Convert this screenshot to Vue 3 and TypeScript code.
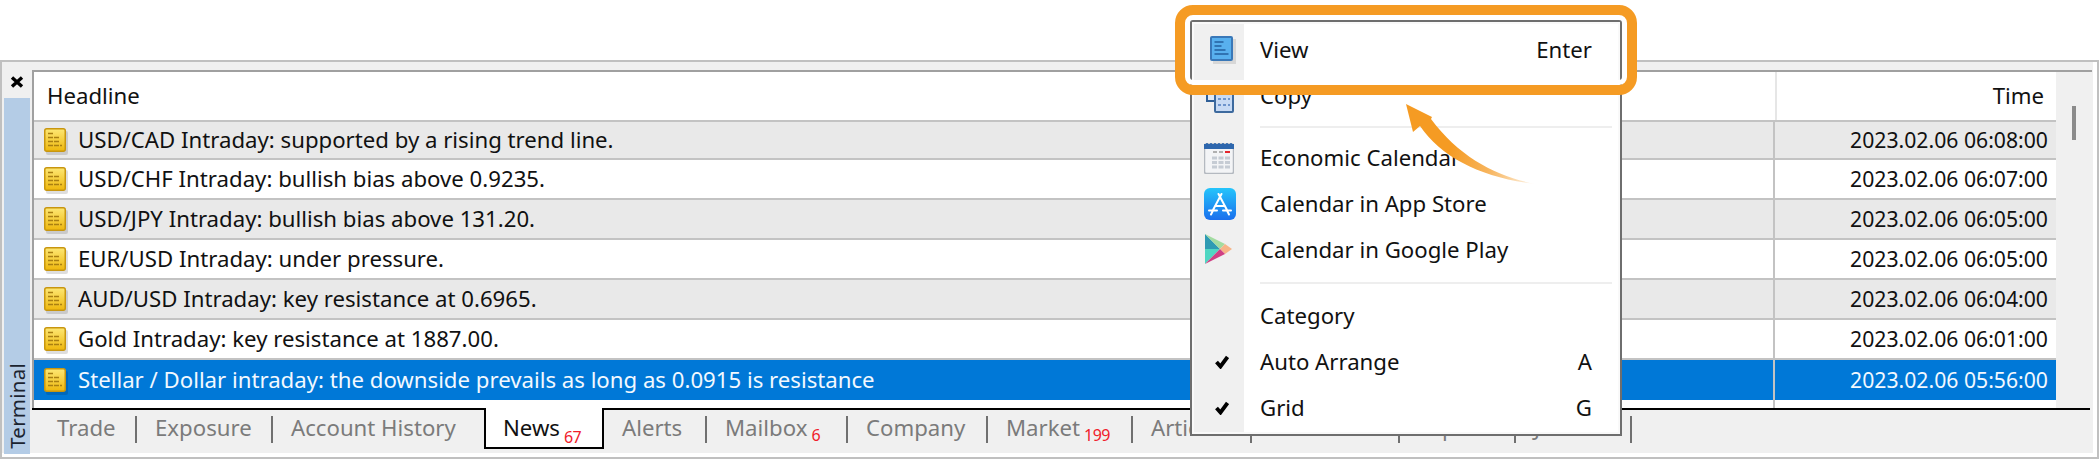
<script setup lang="ts">
interface Row { text: string; time: string; tone: 'grey' | 'white' | 'sel' }
interface Tab { label: string; badge?: string; width: number; active?: boolean }

const rows: Row[] = [
  { text: 'USD/CAD Intraday: supported by a rising trend line.', time: '2023.02.06 06:08:00', tone: 'grey' },
  { text: 'USD/CHF Intraday: bullish bias above 0.9235.', time: '2023.02.06 06:07:00', tone: 'white' },
  { text: 'USD/JPY Intraday: bullish bias above 131.20.', time: '2023.02.06 06:05:00', tone: 'grey' },
  { text: 'EUR/USD Intraday: under pressure.', time: '2023.02.06 06:05:00', tone: 'white' },
  { text: 'AUD/USD Intraday: key resistance at 0.6965.', time: '2023.02.06 06:04:00', tone: 'grey' },
  { text: 'Gold Intraday: key resistance at 1887.00.', time: '2023.02.06 06:01:00', tone: 'white' },
  { text: 'Stellar / Dollar intraday: the downside prevails as long as 0.0915 is resistance', time: '2023.02.06 05:56:00', tone: 'sel' },
]

const tabs: Tab[] = [
  { label: 'Trade', width: 98 },
  { label: 'Exposure', width: 136 },
  { label: 'Account History', width: 211 },
  { label: 'News', badge: '67', width: 120, active: true },
  { label: 'Alerts', width: 103 },
  { label: 'Mailbox', badge: '6', width: 141 },
  { label: 'Company', width: 140 },
  { label: 'Market', badge: '199', width: 145 },
  { label: 'Articles', width: 119 },
  { label: 'Code Base', width: 148 },
  { label: 'Experts', width: 116 },
  { label: 'Journal', width: 116 },
]
</script>

<template>
  <div class="page">
    <section class="window">
      <aside class="side">
        <svg class="close" width="14" height="12" viewBox="0 0 14 12">
          <path d="M2 1.5 L12 10.5 M12 1.5 L2 10.5" stroke="#000" stroke-width="3.4" fill="none" />
        </svg>
        <div class="side-bar"><span class="side-label">Terminal</span></div>
      </aside>

      <div class="main">
        <div class="table-wrap">
          <div class="table">
            <div class="line head">
              <div class="cell-main head-title">Headline</div>
              <div class="cell-time head-time">Time</div>
            </div>
            <div v-for="row in rows" :key="row.text + row.time" class="line row" :class="row.tone">
              <div class="cell-main">
                <svg class="note" width="26" height="28" viewBox="0 0 26 28">
                  <defs>
                    <linearGradient id="gold" x1="0" y1="0" x2="0" y2="1">
                      <stop offset="0" stop-color="#fde774" />
                      <stop offset="1" stop-color="#eeb70c" />
                    </linearGradient>
                  </defs>
                  <rect x="2" y="3" width="22" height="24" rx="2" fill="#000" opacity="0.13" />
                  <rect x="0.75" y="0.75" width="20.5" height="22.5" rx="2" fill="url(#gold)" stroke="#c8960f" stroke-width="1.5" />
                  <path d="M4 5.5h6M4 9.5h12M4 13.5h12M4 17.5h14" stroke="#a97f12" stroke-width="1.4" stroke-dasharray="5 1" fill="none" />
                </svg>
                <span class="row-text">{{ row.text }}</span>
              </div>
              <div class="cell-time">{{ row.time }}</div>
            </div>
            <div class="line filler"><div></div><div class="cell-time"></div></div>
          </div>
          <div class="scroll"><div class="thumb"></div></div>
        </div>

        <nav class="tabs">
          <div
            v-for="tab in tabs"
            :key="tab.label"
            class="tab"
            :class="{ active: tab.active }"
            :style="{ width: tab.width + 'px' }"
          >
            <span>{{ tab.label }}</span>
            <span v-if="tab.badge" class="badge">{{ tab.badge }}</span>
          </div>
        </nav>
      </div>
    </section>

    <div class="menu">
      <div class="menu-list">
        <div class="item">
          <div class="item-icon">
            <svg class="shift-4" width="26" height="28" viewBox="0 0 26 28">
              <rect x="3" y="3" width="23" height="25" fill="#000" opacity="0.1" />
              <rect x="1" y="1" width="21" height="23" rx="1" fill="#58b0ee" stroke="#3a78b8" stroke-width="2" />
              <path d="M4.5 6h9M4.5 10h7M4.5 14h11M4.5 18h14" stroke="#235f9e" stroke-width="1.6" fill="none" />
            </svg>
          </div>
          <span class="item-label">View</span><span class="item-key">Enter</span>
        </div>
        <div class="item">
          <div class="item-icon">
            <svg width="30" height="34" viewBox="0 0 30 34">
              <rect x="3" y="2" width="17" height="20" fill="#dfe9f6" stroke="#2f5f97" stroke-width="2" />
              <rect x="11" y="13" width="18" height="20" rx="1" fill="#c7daf4" stroke="#3d6a9e" stroke-width="2" />
              <path d="M14 20h12M14 26h12" stroke="#6d94cc" stroke-width="2" stroke-dasharray="3 2" fill="none" />
            </svg>
          </div>
          <span class="item-label">Copy</span>
        </div>
        <div class="sep sep-a"></div>
        <div class="item">
          <div class="item-icon">
            <svg width="30" height="32" viewBox="0 0 30 32">
              <rect x="0.5" y="2" width="29" height="29.5" rx="2" fill="#f3f4f6" stroke="#b4b9c0" stroke-width="1.5" />
              <rect x="0" y="2" width="30" height="5" fill="#2e67ad" />
              <path d="M3 1v4M7 1v4M11 1v4M15 1v4M19 1v4M23 1v4M27 1v4" stroke="#2e67ad" stroke-width="1.6" />
              <path d="M9 10h4M15 10h4" stroke="#b0b0b0" stroke-width="2" />
              <path d="M21 10h5" stroke="#e5262c" stroke-width="2" />
              <path d="M8 16h18M8 20.5h18M8 25h18" stroke="#c6ccd4" stroke-width="3" stroke-dasharray="5 1.5" />
            </svg>
          </div>
          <span class="item-label">Economic Calendar</span>
        </div>
        <div class="item">
          <div class="item-icon">
            <svg class="shift-1" width="32" height="32" viewBox="0 0 32 32">
              <defs>
                <linearGradient id="store" x1="0" y1="0" x2="0" y2="1">
                  <stop offset="0" stop-color="#25c5fb" />
                  <stop offset="1" stop-color="#1a6fed" />
                </linearGradient>
              </defs>
              <rect width="32" height="32" rx="6" fill="url(#store)" />
              <path d="M17.5 6 L9 22 M14.5 6 L23 22 M5 22.5h8M19 22.5h8M11 18h10M7 26.5l2-4M25 26.5l-2-4" stroke="#fff" stroke-width="2" stroke-linecap="round" fill="none" />
            </svg>
          </div>
          <span class="item-label">Calendar in App Store</span>
        </div>
        <div class="item">
          <div class="item-icon">
            <svg width="30" height="34" viewBox="0 0 30 34">
              <path d="M1 1 V16 L16 16 Z" fill="#2f9bb3" />
              <path d="M1 16 V31 L16 16 Z" fill="#4fd6c2" />
              <path d="M1 1 L16 16 L21 11 Z" fill="#a3dca0" />
              <path d="M21 11 L16 16 L21 21 L28 16 Z" fill="#f7b487" />
              <path d="M1 31 L16 16 L21 21 Z" fill="#cf3f84" />
            </svg>
          </div>
          <span class="item-label">Calendar in Google Play</span>
        </div>
        <div class="sep sep-b"></div>
        <div class="item">
          <div class="item-icon"></div>
          <span class="item-label">Category</span>
        </div>
        <div class="item">
          <div class="item-icon">
            <svg class="shift-2" width="14" height="14" viewBox="0 0 14 14">
              <path d="M1.5 7 L5.5 11.5 L12.5 2" stroke="#000" stroke-width="3.8" fill="none" />
            </svg>
          </div>
          <span class="item-label">Auto Arrange</span><span class="item-key">A</span>
        </div>
        <div class="item">
          <div class="item-icon">
            <svg class="shift-2" width="14" height="14" viewBox="0 0 14 14">
              <path d="M1.5 7 L5.5 11.5 L12.5 2" stroke="#000" stroke-width="3.8" fill="none" />
            </svg>
          </div>
          <span class="item-label">Grid</span><span class="item-key">G</span>
        </div>
      </div>
    </div>

    <div class="ring"></div>

    <svg class="arrow" width="160" height="100" viewBox="1400 100 160 100">
      <defs>
        <linearGradient id="fade" gradientUnits="userSpaceOnUse" x1="1450" y1="150" x2="1536" y2="184">
          <stop offset="0" stop-color="#f59b23" />
          <stop offset="0.45" stop-color="#f7b35a" />
          <stop offset="1" stop-color="#f59b23" stop-opacity="0" />
        </linearGradient>
      </defs>
      <path d="M1536 184 C1498 177 1460 158 1431 119 L1432 117 L1406 104 L1413 132 L1420 126 C1442 158 1482 178 1536 184 Z" fill="url(#fade)" />
    </svg>
  </div>
</template>

<style scoped>
.page {
  position: relative;
  width: 2100px;
  height: 460px;
  overflow: hidden;
  background: #fff;
  padding-top: 60px;
  box-sizing: border-box;
  font-family: "Noto Sans", "Open Sans", sans-serif;
  font-size: 22.2px;
  color: #111;
}
.window {
  display: flex;
  width: 2099px;
  height: 399px;
  box-sizing: border-box;
  border: 2px solid #c0c0c0;
  background: #f0f0f0;
  padding-right: 4px;
  box-shadow: inset -4px -4px 0 #fff;
}
.side {
  width: 30px;
  flex: none;
  display: flex;
  flex-direction: column;
  align-items: center;
  padding-top: 14px;
  box-sizing: border-box;
}
.close { flex: none; }
.side-bar {
  margin-top: 10px;
  width: 26px;
  flex: 1;
  margin-bottom: 3px;
  background: #b4cce6;
  display: flex;
  flex-direction: column;
  justify-content: flex-end;
  align-items: center;
}
.side-label {
  writing-mode: vertical-rl;
  transform: rotate(180deg);
  font-size: 20.4px;
  letter-spacing: 0.3px;
  line-height: 26px;
  padding-top: 5px;
  color: #1b2430;
}
.main {
  flex: 1;
  min-width: 0;
  padding-top: 8px;
  display: flex;
  flex-direction: column;
}
.table-wrap {
  display: flex;
  height: 338px;
  box-sizing: border-box;
  border-top: 2px solid #a0a0a0;
  border-left: 2px solid #a0a0a0;
  width: 2060px;
}
.table {
  width: 2022px;
  flex: none;
  background: #fff;
  display: flex;
  flex-direction: column;
}
.scroll {
  flex: 1;
  background: #f0f0f0;
  position: relative;
}
.thumb {
  position: absolute;
  left: 16px;
  top: 34px;
  width: 4px;
  height: 34px;
  background: #8b8b8b;
}
.line {
  display: grid;
  grid-template-columns: 1fr 283px;
  box-sizing: border-box;
}
.head { height: 50px; border-bottom: 2px solid #c3c3c3; }
.head-title { padding-left: 13px; padding-bottom: 2px; }
.cell-time.head-time {
  border-left: 2px solid transparent;
  box-shadow: inset 2px 0 0 #e6e6e6;
  padding-right: 12px;
  font-size: 22.2px;
}
.row { height: 40px; border-bottom: 2px solid #c3c3c3; }
.row:nth-child(2) { height: 38px; }
.row.grey { background: #e9e9e9; }
.row.white { background: #fff; }
.row.sel { background: #0078d7; color: #f2f8ff; border-bottom: none; }
.cell-main {
  display: flex;
  align-items: center;
  min-width: 0;
}
.row .cell-main { padding-left: 10px; }
.note { flex: none; margin-right: 8px; margin-top: 3px; }
.row-text { white-space: nowrap; padding-bottom: 2px; }
.cell-time {
  border-left: 2px solid #c3c3c3;
  font-size: 21.2px;
  padding-right: 8px;
  padding-bottom: 2px;
  display: flex;
  align-items: center;
  justify-content: flex-end;
}
.filler { flex: 1; }
.tabs {
  display: flex;
  align-items: flex-start;
  border-top: 2px solid #000;
  width: 2058px;
  padding-left: 7px;
  padding-top: 6px;
  box-sizing: border-box;
  color: #7b7b7b;
}
.tab {
  flex: none;
  box-sizing: border-box;
  height: 27px;
  padding-left: 18px;
  padding-bottom: 5px;
  border-right: 2px solid #707070;
  display: flex;
  align-items: center;
  white-space: nowrap;
}
.tab:nth-child(3) { border-right: none; }
.tab.active {
  height: 41px;
  margin-top: -8px;
  padding-left: 17px;
  padding-bottom: 0;
  background: #fff;
  color: #111;
  border: 2px solid #000;
  border-top: none;
}
.badge {
  align-self: flex-end;
  margin-left: 4px;
  margin-bottom: -5px;
  font-size: 16px;
  line-height: 15px;
  color: #f0202a;
  letter-spacing: -0.6px;
}
.tab.active .badge { margin-bottom: 2px; }
.menu {
  position: absolute;
  left: 1190px;
  top: 20px;
  width: 432px;
  height: 416px;
  box-sizing: border-box;
  border: 2px solid #6e6e6e;
  background: #f9f9f9;
  padding: 2px 2px 2px;
}
.menu-list {
  height: 100%;
  box-sizing: border-box;
  padding-top: 3px;
  background: linear-gradient(to right, #f0f0f0 50px, #fff 50px);
}
.item {
  height: 46px;
  display: flex;
  align-items: center;
}
.item-icon {
  width: 50px;
  height: 46px;
  flex: none;
  display: flex;
  align-items: center;
  justify-content: center;
}
.shift-1 { margin-left: 2px; }
.shift-2 { margin-left: 6px; }
.shift-4 { margin-left: 8px; }
.item-label { margin-left: 16px; padding-bottom: 2px; }
.item-key {
  margin-left: auto;
  margin-right: 26px;
  padding-bottom: 2px;
}
.sep { margin-left: 66px; margin-right: 6px; display: flex; align-items: center; }
.sep::after { content: ""; flex: 1; height: 2px; background: #eeeeee; }
.sep-a { height: 16px; }
.sep-b { height: 20px; }
.ring {
  position: absolute;
  left: 1175px;
  top: 5px;
  width: 462px;
  height: 90px;
  box-sizing: border-box;
  border: 10px solid #f59b23;
  border-radius: 18px;
  box-shadow: inset 0 0 0 5px #fff;
}
.arrow {
  position: absolute;
  left: 1400px;
  top: 100px;
}
</style>

<style>
html, body { margin: 0; padding: 0; background: #fff; }
</style>
